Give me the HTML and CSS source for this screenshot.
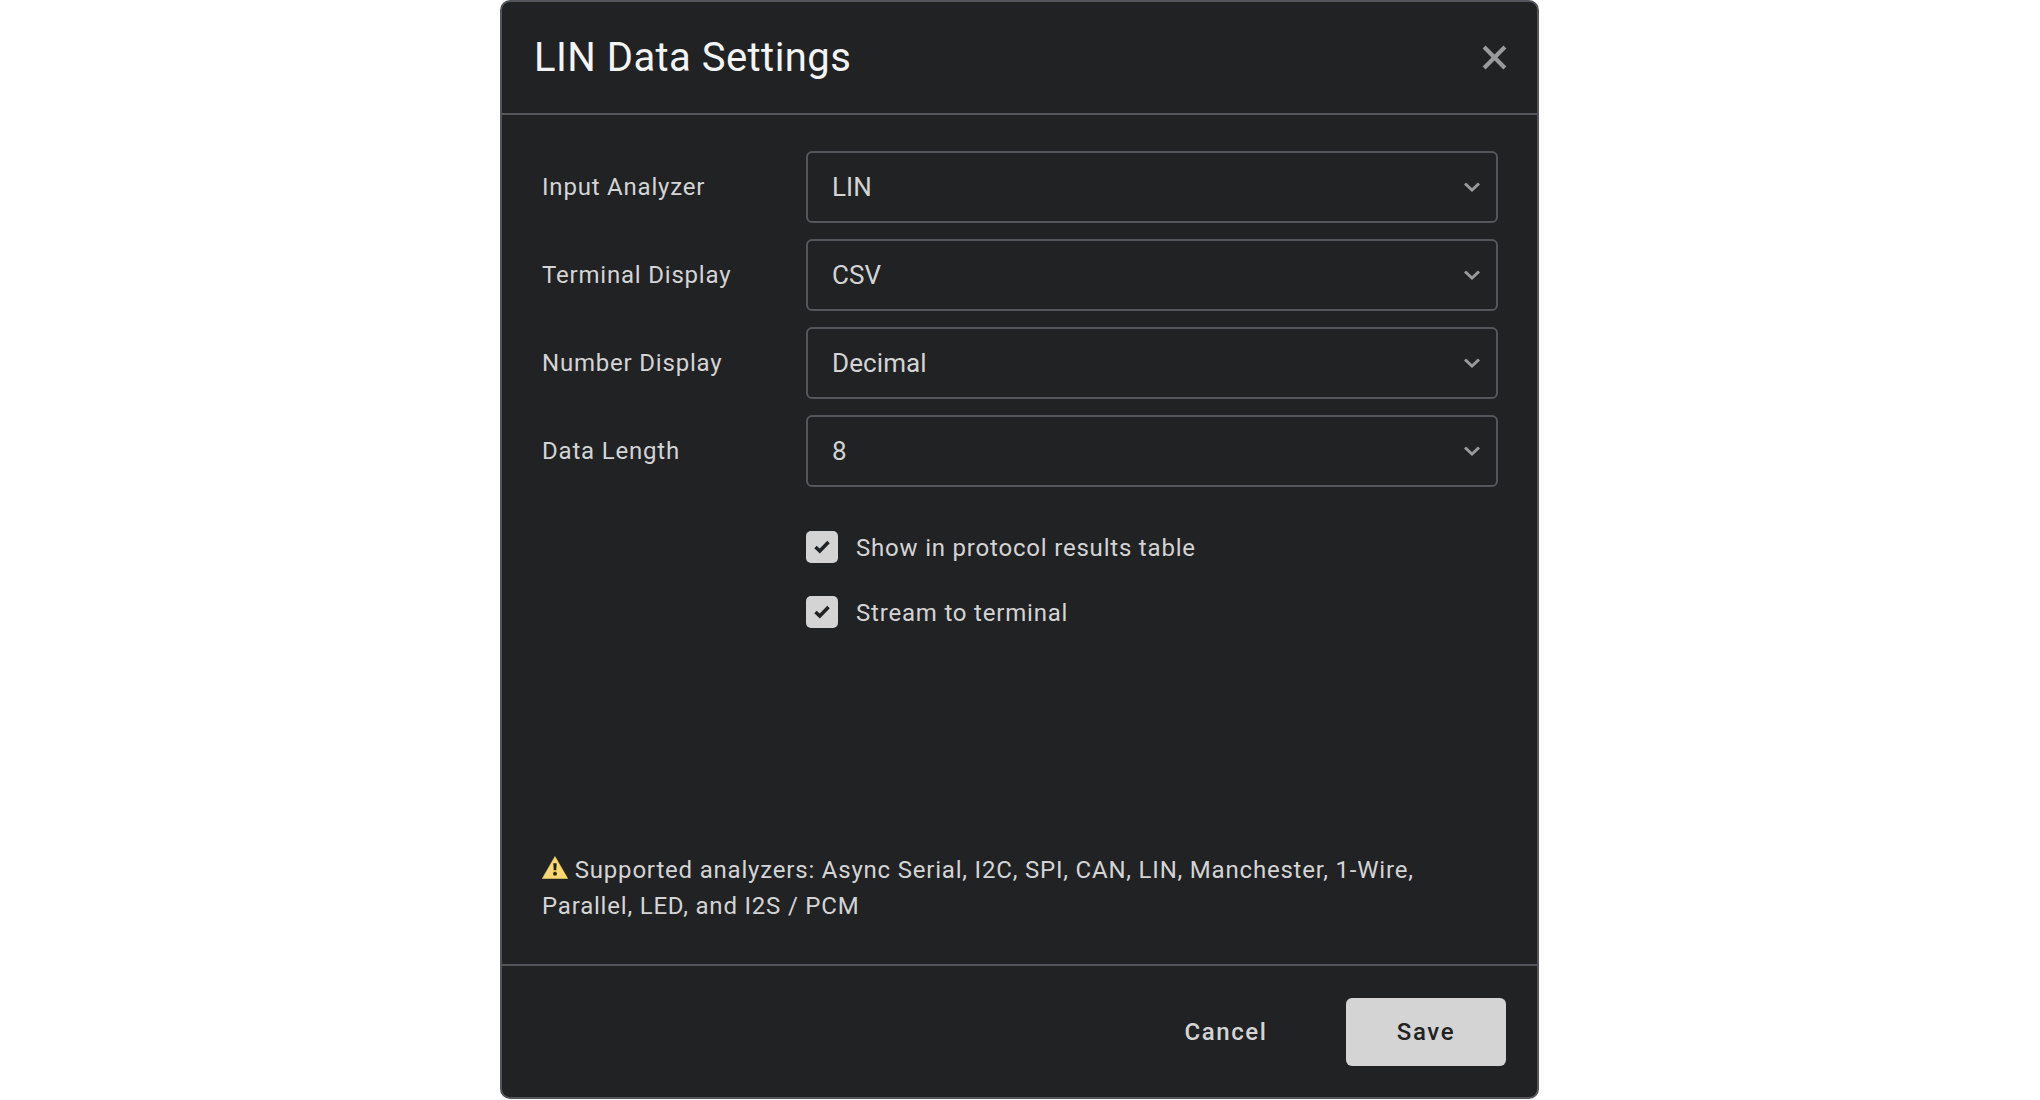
FILE: index.html
```html
<!DOCTYPE html>
<html lang="en">
<head>
    <meta charset="UTF-8">
    <title>LIN Data Settings</title>
    <link rel="stylesheet" href="styles.css">
</head>
<body>
    <div class="dialog">
        <div class="dialog-header">
            <h1>LIN Data Settings</h1>
            <svg class="close-icon" viewBox="0 0 24 24"><path d="M2 2 22 22M22 2 2 22"/></svg>
        </div>

        <div class="dialog-body">
            <div class="form-row">
                <label>Input Analyzer</label>
                <div class="select">LIN
                    <svg class="chevron" viewBox="0 0 16 10"><path d="M1 1.500 8 8 15 1.500"/></svg>
                </div>
            </div>
            <div class="form-row">
                <label>Terminal Display</label>
                <div class="select">CSV
                    <svg class="chevron" viewBox="0 0 16 10"><path d="M1 1.500 8 8 15 1.500"/></svg>
                </div>
            </div>
            <div class="form-row">
                <label>Number Display</label>
                <div class="select">Decimal
                    <svg class="chevron" viewBox="0 0 16 10"><path d="M1 1.500 8 8 15 1.500"/></svg>
                </div>
            </div>
            <div class="form-row">
                <label>Data Length</label>
                <div class="select">8
                    <svg class="chevron" viewBox="0 0 16 10"><path d="M1 1.500 8 8 15 1.500"/></svg>
                </div>
            </div>

            <div class="checks">
                <div class="check-row">
                    <span class="checkbox"><svg viewBox="0 0 16 14"><path d="M1.500 7 5.800 11 14.500 2"/></svg></span>
                    <span class="check-label">Show in protocol results table</span>
                </div>
                <div class="check-row">
                    <span class="checkbox"><svg viewBox="0 0 16 14"><path d="M1.500 7 5.800 11 14.500 2"/></svg></span>
                    <span class="check-label">Stream to terminal</span>
                </div>
            </div>

            <p class="note">
                <svg class="warn-icon" viewBox="0 0 26 23"><path fill-rule="evenodd" d="M13 .5 25.700 22.500H.3ZM11 7 11.500 14.500H14.500L15 7ZM13 15.500A2.200 2.200 0 1 0 13 19.900 2.200 2.200 0 1 0 13 15.500Z"/></svg>
                Supported analyzers: Async Serial, I2C, SPI, CAN, LIN, Manchester, 1-Wire, Parallel, LED, and I2S / PCM
            </p>
        </div>

        <div class="dialog-footer">
            <button class="btn-cancel">Cancel</button>
            <button class="btn-save">Save</button>
        </div>
    </div>
</body>
</html>
```

FILE: styles.css
```css
html, body {
    margin: 0;
    height: 100%;
}
body {
    background-color: white;
    font-family: Roboto, sans-serif;
    color: #d4d4d4;
    display: flex;
    justify-content: center;
    align-items: flex-start;
    padding-right: 1px;
    box-sizing: border-box;
}
.dialog {
    width: 1039px;
    height: 1099px;
    box-sizing: border-box;
    background-color: #212224;
    border: 2px solid #55565c;
    border-radius: 10px;
    display: flex;
    flex-direction: column;
}
.dialog-header {
    height: 113px;
    flex-shrink: 0;
    box-sizing: border-box;
    padding: 0 30px 0 32px;
    border-bottom: 2px solid #55565c;
    display: flex;
    align-items: center;
    justify-content: space-between;
}
h1 {
    margin: 0;
    font-size: 40px;
    font-weight: 400;
    letter-spacing: 0.45px;
    color: #f4f4f4;
}
.close-icon {
    width: 25px;
    height: 25px;
    fill: none;
    stroke: #9a9a9a;
    stroke-width: 4;
}
.dialog-body {
    flex: 1;
    padding: 36px 39px 0 40px;
    display: flex;
    flex-direction: column;
}
.form-row {
    display: flex;
    align-items: center;
    margin-bottom: 16px;
}
label {
    width: 264px;
    flex-shrink: 0;
    font-size: 24px;
    letter-spacing: 0.8px;
}
.select {
    flex: 1;
    height: 72px;
    box-sizing: border-box;
    padding: 0 16px 0 24px;
    border: 2px solid #55565c;
    border-radius: 6px;
    font-size: 26px;
    letter-spacing: 0.1px;
    display: flex;
    align-items: center;
    justify-content: space-between;
}
.chevron {
    width: 16px;
    height: 10px;
    fill: none;
    stroke: #9a9a9a;
    stroke-width: 3;
}
.checks {
    margin: 28px 0 0 264px;
    display: flex;
    flex-direction: column;
    gap: 33px;
}
.check-row {
    display: flex;
    align-items: center;
    gap: 18px;
    font-size: 24px;
    letter-spacing: 0.8px;
}
.check-label {
    margin-top: 2px;
}
.checkbox {
    width: 32px;
    height: 32px;
    border-radius: 5px;
    background-color: #d4d4d4;
    display: flex;
    align-items: center;
    justify-content: center;
}
.checkbox svg {
    width: 16px;
    height: 14px;
    fill: none;
    stroke: #212224;
    stroke-width: 3.5;
}
.note {
    margin: auto 0 40px;
    font-size: 24px;
    line-height: 36px;
    letter-spacing: 0.8px;
}
.warn-icon {
    width: 26px;
    height: 23px;
    fill: #ffd970;
    stroke: #ffd970;
    stroke-width: 0.5;
    stroke-linejoin: round;
    vertical-align: -1px;
}
.dialog-footer {
    height: 133px;
    flex-shrink: 0;
    box-sizing: border-box;
    padding: 32px 31px 0 0;
    border-top: 2px solid #55565c;
    display: flex;
    justify-content: flex-end;
    align-items: flex-start;
    gap: 60px;
}
button {
    font-family: Roboto, sans-serif;
    font-size: 24px;
    font-weight: 500;
    letter-spacing: 1.6px;
    height: 68px;
    border: none;
    border-radius: 6px;
}
.btn-cancel {
    width: 120px;
    background: none;
    color: #d4d4d4;
}
.btn-save {
    width: 160px;
    background-color: #d4d4d4;
    color: #212224;
}
```
